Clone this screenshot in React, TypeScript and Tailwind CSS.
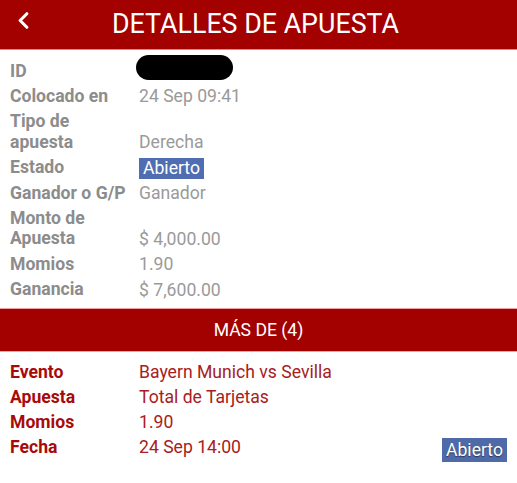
import { ChevronLeft } from "lucide-react";

const rows: { label: string[]; value: React.ReactNode }[] = [
  { label: ["ID"], value: <div className="w-[97px] h-[25px] rounded-full bg-black -ml-[3px] -mt-[6px]" /> },
  { label: ["Colocado en"], value: "24 Sep 09:41" },
  { label: ["Tipo de", "apuesta"], value: "Derecha" },
  { label: ["Estado"], value: <span className="bg-[#4f6db0] text-white px-[4px] leading-[21px] inline-block">Abierto</span> },
  { label: ["Ganador o G/P"], value: "Ganador" },
  { label: ["Monto de", "Apuesta"], value: "$ 4,000.00" },
  { label: ["Momios"], value: "1.90" },
  { label: ["Ganancia"], value: "$ 7,600.00" },
];

const eventRows = [
  { label: "Evento", value: "Bayern Munich vs Sevilla" },
  { label: "Apuesta", value: "Total de Tarjetas" },
  { label: "Momios", value: "1.90" },
  { label: "Fecha", value: "24 Sep 14:00" },
];

export default function App() {
  return (
    <div className="w-[517px] h-[483px] bg-white overflow-hidden font-['Roboto',sans-serif] text-[17.6px]">
      <header className="h-[50px] bg-[#a30000] border-b border-[#f08080] flex items-center relative">
        <ChevronLeft className="absolute left-[10px] top-[7px] text-white" size={27} strokeWidth={2.8} />
        <h1 className="w-full text-center text-white text-[26.8px] pr-[6px]">DETALLES DE APUESTA</h1>
      </header>

      <div className="pt-[8px] pb-[6px] pl-[10px]">
        {rows.map((r, i) => (
          <div key={i} className="flex items-end leading-[20.4px] py-[2.5px]">
            <div className="w-[129px] font-bold text-[#8c8c8c]">
              {r.label.map((l) => (
                <div key={l}>{l}</div>
              ))}
            </div>
            <div className="text-[#9a9a9a] h-[20px]">{r.value}</div>
          </div>
        ))}
      </div>

      <div className="h-[44px] bg-[#a30000] border-y border-[#f0a0a0] flex items-center justify-center text-white">
        MÁS DE (4)
      </div>

      <div className="pt-[7px] pl-[10px] pr-[10px]">
        {eventRows.map((r, i) => (
          <div key={r.label} className="flex items-center leading-[20px] py-[2.5px]">
            <div className="w-[129px] font-bold text-[#a80a0a]">{r.label}</div>
            <div className="text-[#a82020] flex-1">{r.value}</div>
            {i === 3 && (
              <span className="bg-[#4f6aa8] text-white px-[4px] leading-[24px] -mb-[6px] [text-shadow:0_1px_1px_rgba(0,0,0,0.5)]">
                Abierto
              </span>
            )}
          </div>
        ))}
      </div>
    </div>
  );
}
